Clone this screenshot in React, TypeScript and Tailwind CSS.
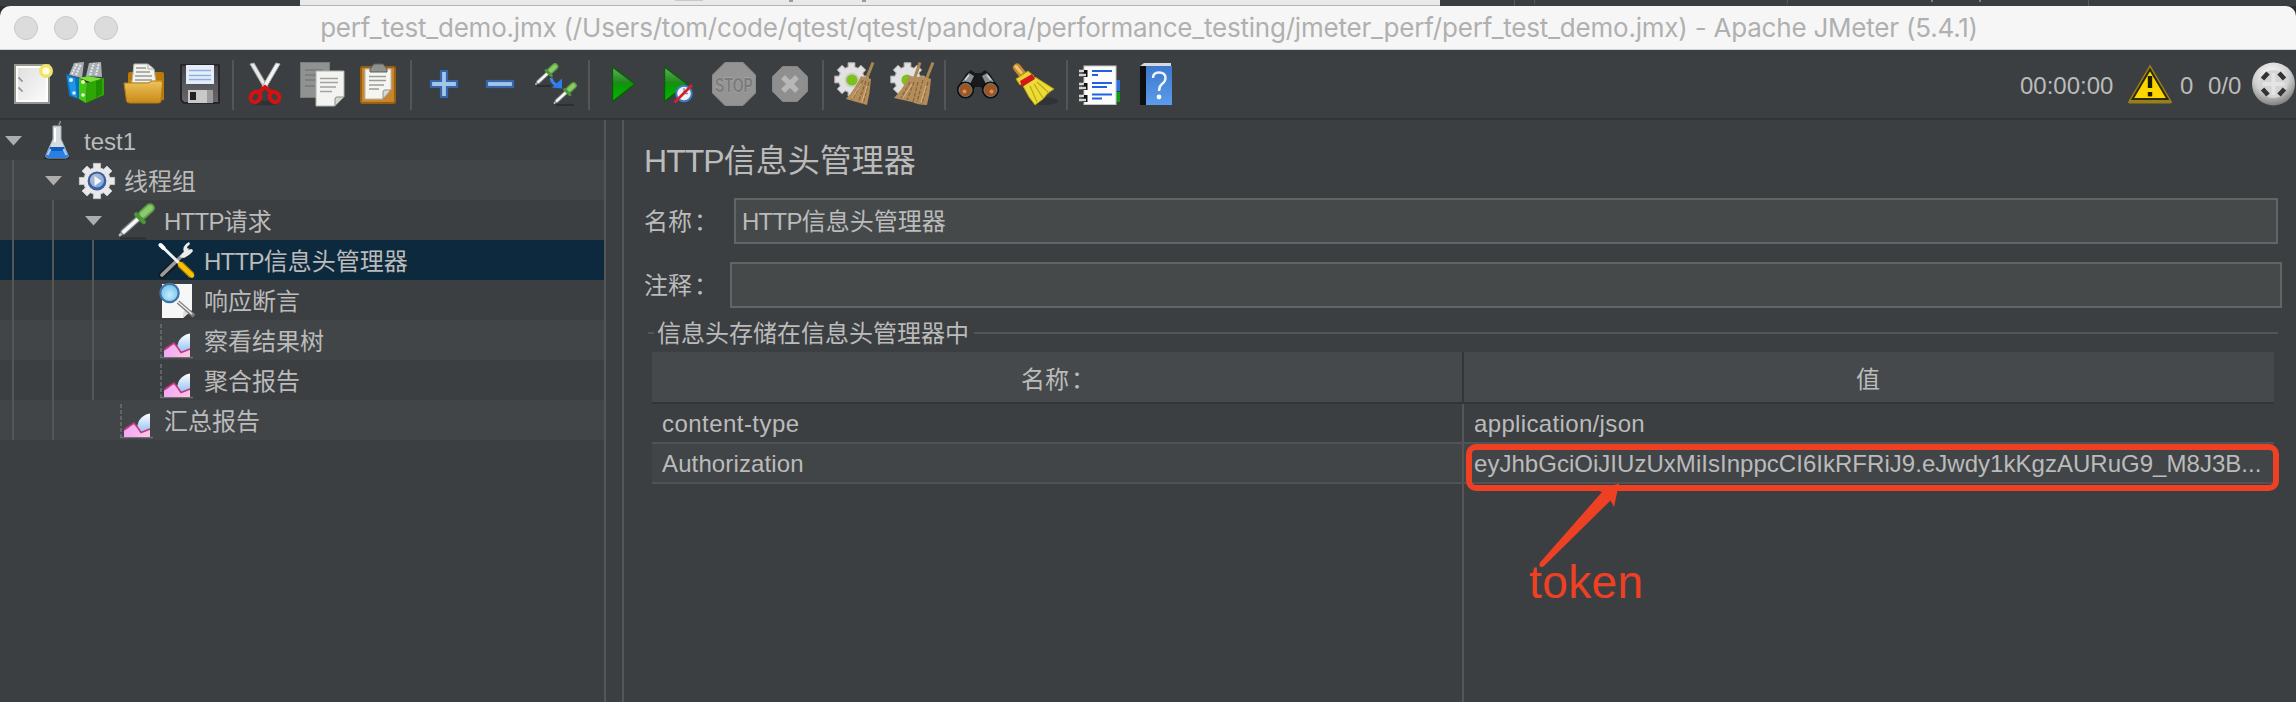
import type { ReactNode } from "react";

const latin = "font-['Liberation_Sans','Noto_Sans_CJK_SC',sans-serif]";

/* Toolbar slot: the drawing inside uses toolbar-wide coordinates. */
function Slot({ x, w, children }: { x: number; w: number; children: ReactNode }) {
  return (
    <svg className="h-[68px] shrink-0" width={w} height={68} viewBox={`${x} 50 ${w} 68`}>
      {children}
    </svg>
  );
}

function Sep() {
  return <div className="mt-[10px] h-[50px] w-[2px] shrink-0 bg-[#555555]" />;
}

function gearPoints(cx: number, cy: number, outer: number, inner: number) {
  const pts: string[] = [];
  for (let i = 0; i < 8; i++) {
    const base = (i * Math.PI) / 4;
    const spec: [number, number][] = [
      [-0.26, inner],
      [-0.2, outer],
      [0.2, outer],
      [0.26, inner],
    ];
    for (const [d, r] of spec) {
      pts.push(`${(cx + r * Math.cos(base + d)).toFixed(1)},${(cy + r * Math.sin(base + d)).toFixed(1)}`);
    }
  }
  return pts.join(" ");
}

function octagon(cx: number, cy: number, r: number) {
  const k = r * 0.42;
  return [
    [-k, -r], [k, -r], [r, -k], [r, k], [k, r], [-k, r], [-r, k], [-r, -k],
  ]
    .map(([a, b]) => `${cx + a},${cy + b}`)
    .join(" ");
}

function Dropper({ x1, y1, x2, y2, s = 1 }: { x1: number; y1: number; x2: number; y2: number; s?: number }) {
  const mx = x1 + (x2 - x1) * 0.6;
  const my = y1 + (y2 - y1) * 0.6;
  const bx = x1 + (x2 - x1) * 0.76;
  const by = y1 + (y2 - y1) * 0.76;
  const tx = x1 + (x2 - x1) * 0.12;
  const ty = y1 + (y2 - y1) * 0.12;
  return (
    <g strokeLinecap="round">
      <line x1={x1} y1={y1} x2={tx} y2={ty} stroke="#b4b7b7" strokeWidth={2.4 * s} />
      <line x1={tx} y1={ty} x2={mx} y2={my} stroke="#7c7f7f" strokeWidth={5.4 * s} />
      <line x1={tx} y1={ty} x2={mx} y2={my} stroke="#f6f6f6" strokeWidth={3.2 * s} />
      <line x1={bx} y1={by} x2={x2} y2={y2} stroke="#5ba343" strokeWidth={8.4 * s} />
      <line x1={bx} y1={by} x2={x2} y2={y2} stroke="#8cc96c" strokeWidth={5 * s} />
      <line x1={mx - 1.6 * s} y1={my - 3.8 * s} x2={mx + 5 * s} y2={my + 2.8 * s} stroke="#4c9539" strokeWidth={3.8 * s} />
    </g>
  );
}

function Gradients() {
  return (
    <svg className="absolute h-0 w-0">
      <defs>
        <linearGradient id="green" x1="0" y1="0" x2="0" y2="1">
          <stop offset="0" stopColor="#5fb35a" />
          <stop offset=".45" stopColor="#1f8a1c" />
          <stop offset=".55" stopColor="#0b9a05" />
          <stop offset="1" stopColor="#04b800" />
        </linearGradient>
        <linearGradient id="folder" x1="0" y1="0" x2="0" y2="1">
          <stop offset="0" stopColor="#edc25c" />
          <stop offset="1" stopColor="#c88a14" />
        </linearGradient>
        <linearGradient id="paper" x1="0" y1="0" x2="1" y2="1">
          <stop offset="0" stopColor="#e0e0e0" />
          <stop offset="1" stopColor="#fafafa" />
        </linearGradient>
        <linearGradient id="disk" x1="0" y1="0" x2="0" y2="1">
          <stop offset="0" stopColor="#45454a" />
          <stop offset="1" stopColor="#68686c" />
        </linearGradient>
        <linearGradient id="book" x1="0" y1="0" x2="0" y2="1">
          <stop offset="0" stopColor="#3c78cc" />
          <stop offset="1" stopColor="#5c9cec" />
        </linearGradient>
        <linearGradient id="sky" x1="0" y1="0" x2="0" y2="1">
          <stop offset="0" stopColor="#ffffff" />
          <stop offset="1" stopColor="#7db4f4" />
        </linearGradient>
        <linearGradient id="pink" x1="0" y1="0" x2="1" y2="0">
          <stop offset="0" stopColor="#f2a8f8" />
          <stop offset="1" stopColor="#ffc4e0" />
        </linearGradient>
        <linearGradient id="orb" x1="0" y1="0" x2="1" y2="1">
          <stop offset="0" stopColor="#b9c0cc" />
          <stop offset=".5" stopColor="#9db3d6" />
          <stop offset="1" stopColor="#6f9fe4" />
        </linearGradient>
        <radialGradient id="ball" cx=".45" cy=".3" r=".7">
          <stop offset="0" stopColor="#ffffff" />
          <stop offset=".6" stopColor="#cfcfcf" />
          <stop offset="1" stopColor="#808080" />
        </radialGradient>
        <radialGradient id="lens" cx=".5" cy=".6" r=".6">
          <stop offset="0" stopColor="#c6ecfb" />
          <stop offset="1" stopColor="#6cc0e8" />
        </radialGradient>
      </defs>
    </svg>
  );
}

function Toolbar() {
  return (
    <div className="flex h-[68px] shrink-0">
      <Slot x={0} w={58}>
        <rect x="15" y="65" width="34" height="38" fill="#fff" stroke="#96978f" strokeWidth="2" />
        <rect x="18" y="68" width="28" height="32" fill="url(#paper)" />
        <path d="M18 78h2v2h2v2M18 88h2v2h2v2" stroke="#777" strokeWidth="1" fill="none" />
        <circle cx="46" cy="71" r="7" fill="#efe468" />
        <circle cx="46" cy="71" r="3.6" fill="#fffce0" />
      </Slot>
      <Slot x={58} w={58}>
        <path d="M69 75 74 63l10-1-2 16ZM86 76l3-13 12-1 1 15Z" fill="#a9b0b4" />
        <path d="M72 74l5-10M76 75l5-11M90 75l4-12M96 75l3-12" stroke="#e6eaec" strokeWidth="2" strokeDasharray="2 1" />
        <path d="M66 74l13 4v21l-10-3Z" fill="#0a6fc2" />
        <path d="M67 76l8 2 2 20-6-3Z" fill="#1e94e4" />
        <path d="M79 78l9-2 16 3-8 5Z" fill="#7be03a" />
        <path d="M79 78l8 5-1 20-7-4Z" fill="#43c818" />
        <path d="M87 83l17-5v17l-18 8Z" fill="#2ea605" />
        <path d="M102 79v15l-6 4V81Z" fill="#1f8f02" />
        <circle cx="71" cy="80" r="2" fill="#d8f0ff" />
        <circle cx="74" cy="93" r="1.8" fill="#d8f0ff" />
        <circle cx="83" cy="82" r="2" fill="#eaff9a" />
        <circle cx="83" cy="95" r="1.8" fill="#f4ffe0" />
      </Slot>
      <Slot x={116} w={56}>
        <path d="M128 74q0-2 2-2h32q2 0 2 2v26h-36Z" fill="#b97a08" />
        <path d="M131 80h31v8h-31Z" fill="#e0a021" />
        <path d="M134 64h14l6 5 2 14h-24Z" fill="#f2f2ee" stroke="#b9b9b3" />
        <path d="M136 68h10M136 72h14M135 76h17M135 80h17" stroke="#9a9a94" strokeWidth="1.6" />
        <path d="M148 64v5h6" fill="none" stroke="#aaa" />
        <path d="M124 83h24l4-2h9q1.500 0 1.500 2l-1.500 18q0 2-3 2h-28q-3 0-3.500-2Z" fill="url(#folder)" stroke="#b17c12" />
      </Slot>
      <Slot x={172} w={60}>
        <path d="M181 65h38v38h-35l-3-3Z" fill="url(#disk)" stroke="#26262a" strokeWidth="2" />
        <rect x="186" y="65" width="28" height="19" fill="#e4eefa" />
        <path d="M189 70.500h22M189 75.500h22M189 79.500h22" stroke="#8fb0d4" strokeWidth="1.600" />
        <rect x="188" y="90" width="25" height="13" fill="#c9c9c9" />
        <rect x="207" y="90" width="6" height="13" fill="#9c9c9c" />
        <rect x="190" y="92" width="6" height="8" fill="#222" />
      </Slot>
      <Sep />
      <Slot x={234} w={56}>
        <path d="M250 64l4-1 14 24-4 1Z" fill="#e8e8e8" stroke="#a8a8a8" />
        <path d="M280 64l-4-1-14 24 4 1Z" fill="#f4f4f4" stroke="#b4b4b4" />
        <ellipse cx="265" cy="103" rx="14" ry="2.500" fill="#303335" />
        <ellipse cx="255.500" cy="97" rx="4.600" ry="5.400" transform="rotate(35 255.500 97)" fill="none" stroke="#d51212" strokeWidth="4" />
        <ellipse cx="274.500" cy="97" rx="4.600" ry="5.400" transform="rotate(-35 274.500 97)" fill="none" stroke="#d51212" strokeWidth="4" />
        <path d="M259 92l6-5 6 5" fill="none" stroke="#d51212" strokeWidth="4" />
      </Slot>
      <Slot x={290} w={64}>
        <rect x="300.500" y="62.500" width="29" height="35" fill="#909292" stroke="#7a7c7c" />
        <path d="M305 70h18M305 75h14M305 80h12M305 86h10" stroke="#777979" strokeWidth="1.600" />
        <path d="M316 71h28v26l-9 9h-19Z" fill="#f3f3f1" stroke="#b0b0ac" />
        <path d="M344 97h-7q-2 0-2 2v7Z" fill="#d4d4d0" stroke="#8c8c88" />
        <path d="M320 78.500h18M320 82.500h18M320 87h16M320 91.500h12" stroke="#a2a29e" strokeWidth="1.600" />
      </Slot>
      <Slot x={354} w={56}>
        <rect x="361" y="67" width="34" height="36" rx="1.500" fill="#c9852a" stroke="#9a5f10" strokeWidth="2" />
        <path d="M365 69h26v21l-8 9h-18Z" fill="#f5f5f2" stroke="#b8b8b2" />
        <path d="M391 90h-6q-2 0-2 2v7Z" fill="#d8d8d4" stroke="#8f8f8a" />
        <path d="M369 76.500h17M369 80.500h17M369 85h15M369 89h10" stroke="#9c9c98" strokeWidth="1.600" />
        <path d="M374 64h9l4 5v3h-17v-3Z" fill="#8e918c" stroke="#5d605b" />
      </Slot>
      <Sep />
      <Slot x={412} w={60}>
        <path d="M441 71h6v10h10v6h-10v10h-6V87h-10v-6h10Z" fill="#a4c5ea" stroke="#3566a9" strokeWidth="2.200" />
      </Slot>
      <Slot x={472} w={56}>
        <rect x="487" y="81" width="26" height="6" fill="#a4c5ea" stroke="#3566a9" strokeWidth="2.200" />
      </Slot>
      <Slot x={528} w={60}>
        <path d="M537 86h14M556 105h18" stroke="#26292b" strokeWidth="1.500" />
        <Dropper x1={536} y1={84} x2={555} y2={66.500} s={0.8} />
        <Dropper x1={554.500} y1={103} x2={573.500} y2={85.500} s={0.8} />
        <path d="M551 78q1 5 6 7.500" fill="none" stroke="#3a86f0" strokeWidth="3" />
        <path d="M562 78.500v10l-10-1Z" fill="#2d7df2" />
      </Slot>
      <Sep />
      <Slot x={590} w={60}>
        <path d="M612.500 67 635 84l-22.500 17.500Z" fill="url(#green)" stroke="#0a5c0a" strokeWidth="1.400" />
      </Slot>
      <Slot x={650} w={54}>
        <path d="M664.500 67 687 84l-22.500 17.500Z" fill="url(#green)" stroke="#0a5c0a" strokeWidth="1.400" />
        <circle cx="684" cy="93.500" r="7.800" fill="#eef1f6" stroke="#3b7ac8" strokeWidth="2" />
        <path d="M684 88v5.500h4" fill="none" stroke="#8b8f96" strokeWidth="1.400" />
        <path d="M674.500 102.500 692 85" stroke="#d3202c" strokeWidth="2.600" />
      </Slot>
      <Slot x={704} w={60}>
        <polygon points={octagon(734, 84, 21.5)} fill="#949494" stroke="#8b8b8b" />
        <g transform="translate(734 91.500) scale(.7 1)">
          <text textAnchor="middle" fontSize="20" fontWeight="700" fill="#7b7b7b" stroke="#adadad" strokeWidth="1" paintOrder="stroke" fontFamily="Liberation Sans">STOP</text>
        </g>
      </Slot>
      <Slot x={764} w={58}>
        <polygon points={octagon(790, 84, 17.5)} fill="#8f8f8f" stroke="#868686" />
        <path d="M783 77l14 14M797 77l-14 14" stroke="#b7b7b7" strokeWidth="5.500" />
      </Slot>
      <Sep />
      <Slot x={824} w={60}>
        <polygon points={gearPoints(851.5, 79.500, 17, 13)} fill="#e2e2e2" stroke="#b8b8b8" />
        <circle cx="852" cy="80" r="7.500" fill="#cfcfcf" />
        <circle cx="852" cy="80" r="5.600" fill="#7dc11c" />
        <path d="M873 62.500 866 80" stroke="#a88654" strokeWidth="3" />
        <path d="M861 76l10 3q-1 14-4 26l-21-6q9-10 15-23Z" fill="#b48d5c" />
        <path d="M863 80l-11 20M866 81l-8 22M869 82l-6 22" stroke="#8b6638" strokeWidth="1.300" strokeDasharray="4 1.500" />
        <path d="M861 84l-9 14M867 86l-5 16" stroke="#d8b888" strokeWidth="1" />
      </Slot>
      <Slot x={884} w={60}>
        <polygon points={gearPoints(907.5, 79.500, 17, 13)} fill="#e2e2e2" stroke="#b8b8b8" />
        <circle cx="907" cy="80" r="5.600" fill="#7dc11c" />
        <path d="M920 62.500 914 80M933 62.500 926 80" stroke="#a88654" strokeWidth="3" />
        <path d="M909 76l8 1 5-1 9 3q-1 14-4 26-9 0-15-3l-18-4q9-9 15-22Z" fill="#b48d5c" />
        <path d="M910 82l-9 16M914 82l-7 18M918 82l-5 20M923 80l-6 22M928 82l-6 22" stroke="#8b6638" strokeWidth="1.300" strokeDasharray="4 1.500" />
        <path d="M912 84l-9 14M926 86l-5 16" stroke="#d8b888" strokeWidth="1" />
      </Slot>
      <Sep />
      <Slot x={946} w={60}>
        <path d="M957 88l9-14 5-4 4 3h6l4-3 5 4 9 14-5 9-9-1-4-9h-6l-4 9-9 1Z" fill="#17191a" />
        <path d="M962 82l7-9 5 3-4 8ZM994 82l-7-9-5 3 4 8Z" fill="#8a9092" />
        <path d="M965 80l4-5M991 80l-4-5" stroke="#cfd4d6" strokeWidth="1.600" />
        <circle cx="965.500" cy="90" r="8" fill="#141414" stroke="#0d0d0d" strokeWidth="1.200" />
        <circle cx="990.500" cy="90" r="8" fill="#141414" stroke="#0d0d0d" strokeWidth="1.200" />
        <circle cx="965.500" cy="90" r="6.500" fill="#9c5420" stroke="#777b7d" strokeWidth="1" />
        <circle cx="990.500" cy="90" r="6.500" fill="#9c5420" stroke="#777b7d" strokeWidth="1" />
        <circle cx="964.500" cy="91.500" r="2" fill="#d89258" />
        <circle cx="991.500" cy="91.500" r="2" fill="#d89258" />
      </Slot>
      <Slot x={1006} w={60}>
        <ellipse cx="1044" cy="101" rx="14" ry="4" fill="#303335" />
        <path d="M1017 67.500l8 10" stroke="#c68a2c" strokeWidth="8" strokeLinecap="round" />
        <path d="M1016 66.500l5 6" stroke="#ecc27a" strokeWidth="3" strokeLinecap="round" />
        <path d="M1016 79l12-8 6 5-14 9Z" fill="#e9d536" stroke="#b59a10" />
        <path d="M1023 86l12-9 19 12-6 4-5 6-8 6-6-8Z" fill="#ecdc38" stroke="#b59a10" />
        <path d="M1030 86l7 16M1034 84l9 14M1037 82l12 11" stroke="#c4a818" strokeWidth="1.300" />
        <path d="M1020 81l12-7 3 5-13 8Z" fill="#d31818" />
      </Slot>
      <Sep />
      <Slot x={1068} w={62}>
        <rect x="1112" y="80" width="8" height="11" fill="#2c70e0" />
        <rect x="1112" y="92" width="8" height="10" fill="#0f9a12" />
        <rect x="1084" y="66" width="32" height="38.500" fill="#fcfcfc" stroke="#c6c6c6" />
        <path d="M1085 70v7M1085 83v7M1085 95v7" stroke="#111" strokeWidth="5" />
        <path d="M1079 71h5M1079 75h7M1079 84h5M1079 88h7M1079 96h5M1079 100h7" stroke="#d4d4d4" strokeWidth="2.500" />
        <path d="M1092 71h20M1092 83h20M1092 87h15M1092 94.500h20M1092 98.500h10M1092 75h6" stroke="#1f62e0" strokeWidth="2" />
      </Slot>
      <Slot x={1130} w={60}>
        <path d="M1140 66l4-3h27v3Z" fill="#d6dade" />
        <rect x="1140" y="66" width="7" height="39" fill="#0e0f10" />
        <rect x="1146" y="66" width="26" height="39" fill="url(#book)" />
        <path d="M1153 78q0-5.500 6-5.500 6.500 0 6.500 5.500 0 3.500-3.500 6-3 2.300-3 7" fill="none" stroke="#eef4fc" strokeWidth="2.400" />
        <circle cx="1159" cy="97" r="2.400" fill="#fff" />
      </Slot>
      <div className="flex-1" />
      <div className={`w-[108px] text-2xl leading-[71px] text-[#bbbbbb] ${latin}`}>00:00:00</div>
      <Slot x={2128} w={52}>
        <path d="M2150 64.500 2171.500 101q1 2.500-1 2.500h-41q-2 0-1-2.500Z" fill="#978019" />
        <path d="M2150 69.500 2167.500 99h-35Z" fill="#ffd500" stroke="#2c2a10" strokeWidth="2" />
        <path d="M2150 76v12" stroke="#1c1a00" strokeWidth="4.400" />
        <path d="M2150 92v4.400" stroke="#1c1a00" strokeWidth="4.400" />
      </Slot>
      <div className={`flex text-2xl leading-[71px] text-[#bbbbbb] ${latin}`}>
        <span className="w-[28px]">0</span>
        <span className="w-[42px]">0/0</span>
      </div>
      <Slot x={2250} w={46}>
        <circle cx="2273.500" cy="84" r="21.500" fill="url(#ball)" />
        <circle cx="2273.500" cy="84" r="14" fill="#d4d4d4" />
        <path d="M2262.500 79l5.500-6M2279 73l5.500 6M2262.500 89l5.500 6M2279 95l5.500-6" stroke="#333" strokeWidth="4.600" />
        <path d="M2273.500 73v22M2262.500 84h22" stroke="#e4e4e4" strokeWidth="4" />
      </Slot>
    </div>
  );
}

function FlaskIcon() {
  return (
    <g>
      <ellipse cx="19" cy="38" rx="13" ry="1.800" fill="#232628" />
      <path d="M21 5l1.500-4" stroke="#8f9294" strokeWidth="1.600" />
      <path d="M15 6h8v13l7 16q1 3-3 3H11q-4 0-3-3l7-16Z" fill="#d5dbe2" stroke="#a6aeb8" />
      <path d="M12 27h14l4 8q1 3-3 3H11q-4 0-3-3Z" fill="#2b7fe0" />
      <path d="M12 27h14v4H12Z" fill="#0d5cc0" />
      <path d="M9.500 35l3-6M28.500 35l-3-6" stroke="#a9ccf4" strokeWidth="2" />
      <path d="M17 8v14" stroke="#fff" strokeWidth="2" />
    </g>
  );
}

function GearIcon() {
  return (
    <g>
      <polygon points={gearPoints(19, 21, 18, 13.5)} fill="#e9e9ec" stroke="#c4c6ca" />
      <circle cx="19" cy="21" r="9.400" fill="#3a5f9e" />
      <circle cx="19" cy="20.500" r="7" fill="url(#orb)" />
      <path d="M16.500 16l7 5-7 5Z" fill="#f4f6fa" />
    </g>
  );
}

function DropperIcon() {
  return (
    <g>
      <path d="M2 38.500h26" stroke="#2b2e30" strokeWidth="2" />
      <Dropper x1={2} y1={35} x2={32} y2={8} s={1.15} />
    </g>
  );
}

function ToolsIcon() {
  return (
    <g strokeLinecap="round">
      <path d="M4 35 20 21" stroke="#18191a" strokeWidth="7" />
      <path d="M4 35 30 10" stroke="#9a9d9e" strokeWidth="3.600" />
      <path d="M28 4q-4 4-2 8-2 1-4 5l4 1q6-3 9-7l-1-2-4 1-1-3 3-3-1-2Z" fill="#eceded" />
      <path d="M2.500 5 20 22" stroke="#f4f4f4" strokeWidth="3" />
      <path d="M2.500 5l3 3" stroke="#fff" strokeWidth="4" />
      <path d="M22 24 34 35.500" stroke="#a77900" strokeWidth="7" strokeLinecap="butt" />
      <path d="M22 24 34 35.500" stroke="#f6c200" strokeWidth="4.600" />
    </g>
  );
}

function AssertIcon() {
  return (
    <g>
      <path d="M4 4h30v26l-9 8H4Z" fill="#f7f7f7" />
      <path d="M34 30h-7q-2 0-2 8Z" fill="#dcdcdc" />
      <path d="M20 22 36 36" stroke="#808080" strokeWidth="4" />
      <path d="M20 22 34 34" stroke="#e8e8e8" strokeWidth="1.600" />
      <circle cx="11.500" cy="13" r="9.200" fill="url(#lens)" stroke="#3f72a8" strokeWidth="2.200" />
    </g>
  );
}

function ChartIcon() {
  return (
    <g>
      <path d="M3 4v34" stroke="#6b6e70" strokeWidth="1.600" strokeDasharray="4 2" />
      <path d="M2 37.500h33" stroke="#6e7173" strokeWidth="1.500" />
      <path d="M19 33q-1-17 13-19.500v22.500H19Z" fill="url(#sky)" />
      <path d="M6 37V30l4-2 6-5 4 6 3 4 9-3v7Z" fill="url(#pink)" />
      <path d="M6 30l4-3 6-4 4 5 3 4.500 9-3.500" fill="none" stroke="#c7357e" strokeWidth="1.600" />
    </g>
  );
}

/* Sets a leading HTTP a little tighter than the text that follows it. */
function Text({ children }: { children: string }) {
  if (!children.startsWith("HTTP")) return <>{children}</>;
  return (
    <>
      <span className="tracking-[-0.03em]">HTTP</span>
      {children.slice(4)}
    </>
  );
}

type Node = { label: string; depth: number; open?: boolean; selected?: boolean; icon: ReactNode };

const nodes: Node[] = [
  { label: "test1", depth: 0, open: true, icon: <FlaskIcon /> },
  { label: "线程组", depth: 1, open: true, icon: <GearIcon /> },
  { label: "HTTP请求", depth: 2, open: true, icon: <DropperIcon /> },
  { label: "HTTP信息头管理器", depth: 3, selected: true, icon: <ToolsIcon /> },
  { label: "响应断言", depth: 3, icon: <AssertIcon /> },
  { label: "察看结果树", depth: 3, icon: <ChartIcon /> },
  { label: "聚合报告", depth: 3, icon: <ChartIcon /> },
  { label: "汇总报告", depth: 2, icon: <ChartIcon /> },
];

function Tree() {
  return (
    <div className="w-[604px] shrink-0">
      {nodes.map((n, i) => (
        <div
          key={i}
          className={`flex h-10 ${n.selected ? "bg-[#0d293e]" : i % 2 ? "bg-[#414547]" : "bg-[#3c3f41]"}`}
        >
          {Array.from({ length: n.depth }, (_, d) => (
            <div key={d} className="w-10 shrink-0 pl-3">
              <div className="h-10 w-[2px] bg-[#555555]" />
            </div>
          ))}
          <svg width="38" height="40" className="shrink-0">
            {n.open && <path d="M5 16h17l-8.500 9.500Z" fill="#adadad" />}
          </svg>
          <svg width="40" height="40" className="shrink-0">
            {n.icon}
          </svg>
          <span className="pl-1.5 leading-[43px] whitespace-nowrap">
            <Text>{n.label}</Text>
          </span>
        </div>
      ))}
    </div>
  );
}

function Label({ children }: { children: string }) {
  return (
    <span className="whitespace-nowrap">
      {children}
      <span className="-mr-[2px] pl-[2px]">：</span>
    </span>
  );
}

const headers = [
  { name: "content-type", value: "application/json", nameClass: "tracking-[0.45px]", valueClass: "tracking-[0.35px]" },
  {
    name: "Authorization",
    value: "eyJhbGciOiJIUzUxMiIsInppcCI6IkRFRiJ9.eJwdy1kKgzAURuG9_M8J3B...",
    nameClass: "tracking-[0.12px]",
    valueClass: "tracking-[0.03px]",
  },
];

function HeaderTable() {
  return (
    <div className="relative ml-7 flex w-[1622px] flex-1 flex-col">
      <div className="flex h-[52px] border-b-2 border-[#313638] bg-[#45494b] text-center leading-[55px]">
        <div className="w-[812px] border-r-2 border-[#313638]">
          <Label>名称</Label>
        </div>
        <div className="flex-1 pr-[2px]">值</div>
      </div>
      {headers.map((h, i) => (
        <div key={h.name} className={`flex h-10 border-b-2 border-[#505355] leading-[40px] ${i % 2 ? "bg-[#414547]" : ""}`}>
          <div className={`w-[812px] border-r-2 border-[#555555] pl-[10px] ${h.nameClass}`}>{h.name}</div>
          <div className={`flex-1 pl-[10px] whitespace-nowrap ${h.valueClass}`}>{h.value}</div>
        </div>
      ))}
      <div className="w-[812px] flex-1 border-r-2 border-[#555555]" />
      <div className="absolute top-[92px] left-[814px] h-[47px] w-[813px] rounded-[10px] border-[6px] border-[#ee4023]" />
      <svg className="absolute top-[128px] left-[880px]" width="100" height="90" viewBox="1532 480 100 90">
        <path
          d="M1619 483.500 1614 507l-3.500-6.500L1544 566q-2.500 2-4 .5t.5-4.500L1602 492l-5-2Z"
          fill="#ee4023"
        />
      </svg>
      <div className="absolute top-[202px] left-[877px] text-[46px] leading-[56px] tracking-[0.4px] text-[#ee4023]">token</div>
    </div>
  );
}

function Editor() {
  return (
    <div className="flex flex-1 flex-col overflow-hidden">
      <div className="h-[78px] pl-[20px] text-[32px] leading-[82px]">
        <Text>HTTP信息头管理器</Text>
      </div>
      <div className="flex h-[46px] pr-[18px] pl-[20px] leading-[47px]">
        <div className="w-[90px]">
          <Label>名称</Label>
        </div>
        <div className="h-[46px] flex-1 border-2 border-[#646464] bg-[#45494a] pl-[6px] leading-[43px]">
          <Text>HTTP信息头管理器</Text>
        </div>
      </div>
      <div className="mt-[18px] flex h-[46px] pr-[14px] pl-[20px] leading-[47px]">
        <div className="w-[86px]">
          <Label>注释</Label>
        </div>
        <div className="h-[46px] flex-1 border-2 border-[#646464] bg-[#45494a]" />
      </div>
      <div className="flex h-[44px] pr-[18px] pl-[24px] leading-[51px]">
        <div className="mt-6 h-[2px] w-[6px] bg-[#555555]" />
        <div className="w-[320px] pl-[3px] whitespace-nowrap">信息头存储在信息头管理器中</div>
        <div className="mt-6 h-[2px] flex-1 bg-[#555555]" />
      </div>
      <HeaderTable />
    </div>
  );
}

export default function App() {
  return (
    <div className={`flex h-[702px] w-[2296px] flex-col overflow-hidden bg-[#3c3f41] text-2xl text-[#bbbbbb] ${latin}`}>
      <Gradients />
      <div className="flex h-[6px] shrink-0 bg-[#3a3e40]">
        <div className="ml-[300px] flex h-[6px] w-[1140px] border-b border-[#b4b4b4] bg-[#e9e9e9]">
          <div className="ml-[375px] h-px w-[28px] bg-[#c8c8c8]" />
          <div className="ml-[86px] h-[2px] w-[4px] bg-[#9a9a9a]" />
          <div className="ml-[69px] h-[2px] w-[4px] bg-[#9a9a9a]" />
        </div>
        <div className="ml-[74px] w-px bg-[#585b5d]" />
        <div className="ml-[19px] h-[5px] w-[254px] rounded-b-[4px] border-x border-[#585b5d]" />
        <div className="ml-[143px] h-[2px] w-[2px] bg-[#7c7f81]" />
        <div className="ml-[46px] h-[2px] w-[2px] bg-[#7c7f81]" />
        <div className="ml-[107px] w-px bg-[#585b5d]" />
      </div>
      <div className="shrink-0 bg-[#2b2d2f]">
        <div className="flex h-[44px] items-center rounded-t-[10px] border-b border-[#d2d2d2] bg-[#f6f6f6] pl-[14px]">
          <div className="flex w-[104px] gap-4">
            <div className="size-6 rounded-full border border-[#c8c8c8] bg-[#dcdcdc]" />
            <div className="size-6 rounded-full border border-[#c8c8c8] bg-[#dcdcdc]" />
            <div className="size-6 rounded-full border border-[#c8c8c8] bg-[#dcdcdc]" />
          </div>
          <div className="flex-1 pr-[116px] text-center font-['Inter',sans-serif] text-[26px] leading-[44px] tracking-[-0.21px] whitespace-nowrap text-[#b0b0b0]">
            perf_test_demo.jmx (/Users/tom/code/qtest/qtest/pandora/performance_testing/jmeter_perf/perf_test_demo.jmx) - Apache JMeter (5.4.1)
          </div>
        </div>
      </div>
      <Toolbar />
      <div className="h-[2px] shrink-0 bg-[#323537]" />
      <div className="flex flex-1">
        <Tree />
        <div className="w-[20px] shrink-0 border-x-2 border-[#555555]" />
        <Editor />
      </div>
    </div>
  );
}
